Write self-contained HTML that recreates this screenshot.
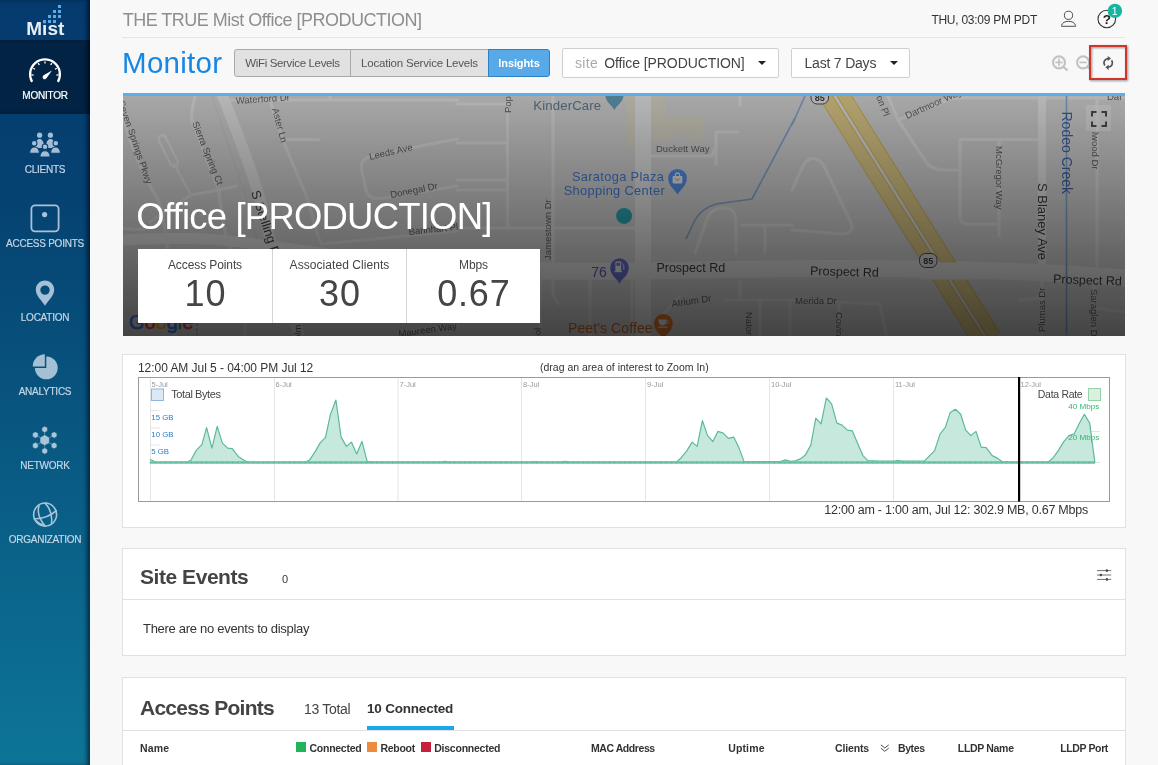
<!DOCTYPE html>
<html><head><meta charset="utf-8">
<style>
*{box-sizing:border-box;margin:0;padding:0}
html,body{width:1158px;height:765px;overflow:hidden;background:#f8f8f8;font-family:"Liberation Sans","DejaVu Sans",sans-serif;color:#333}
.abs{position:absolute}
#side{position:absolute;left:0;top:0;width:90px;height:765px;background:linear-gradient(180deg,#053a6e 0%,#054272 26%,#08547f 52%,#0d7597 100%);box-shadow:inset -4px 0 4px -1px rgba(0,0,10,.55)}
#side .sel{position:absolute;left:0;top:40px;width:90px;height:74px;background:#022344;box-shadow:inset -4px 0 4px -1px rgba(0,0,10,.6)}
.nav{-webkit-text-stroke:0.2px currentColor;position:absolute;left:0;width:90px;text-align:center;color:#c3d6e6;font-size:10px;letter-spacing:-0.25px;line-height:12px;white-space:nowrap}
.nav.on{color:#fff}
.ico{position:absolute;left:0;width:90px}
#title{position:absolute;left:122.7px;top:9px;font-size:18px;line-height:22px;color:#8e8e8e;white-space:nowrap;letter-spacing:-0.5px}
#hline{position:absolute;left:122px;top:37px;width:1003px;height:1px;background:#e1e6ea}
#time{position:absolute;left:899px;width:138px;text-align:right;top:12.7px;font-size:12px;line-height:14px;color:#333;white-space:nowrap;letter-spacing:-0.26px}
#mon{position:absolute;left:122.1px;top:42.8px;font-size:29.5px;line-height:40px;color:#1787e2;letter-spacing:0.25px}
.btn{position:absolute;top:49px;height:28px;border:1px solid #a9a9a9;background:#e1e1e1;font-size:11.5px;line-height:27px;text-align:center;color:#555;white-space:nowrap;letter-spacing:-0.1px}
.dd{position:absolute;top:48px;height:30px;border:1px solid #cfcfcf;border-radius:2px;background:#fff;font-size:14px;line-height:28px;color:#444;white-space:nowrap;letter-spacing:-0.2px}
.caret{position:absolute;top:12px;width:0;height:0;border-left:4.3px solid transparent;border-right:4.3px solid transparent;border-top:4.6px solid #222}
.panel{position:absolute;left:122px;width:1004px;background:#fff;border:1px solid #e1e1e1}
.t{position:absolute;white-space:nowrap}
.hd{font-size:21px;line-height:28px;font-weight:bold;color:#444;letter-spacing:-0.45px}
.th{top:741px;font-size:10.5px;line-height:14px;font-weight:bold;color:#333;letter-spacing:-0.1px}
.stat{position:absolute;top:0;width:134px;height:74px;text-align:center}
.sl{position:absolute;left:0;width:100%;top:9px;font-size:12px;line-height:14px;color:#444;letter-spacing:-0.1px}
.sv{position:absolute;left:0;width:100%;top:22.5px;font-size:36px;line-height:44px;color:#454545;letter-spacing:0.8px;text-indent:0.8px}
</style></head><body><div id="wrap" style="position:absolute;left:0;top:0;width:1158px;height:765px;overflow:hidden;will-change:transform">
<div id="side">
 <div class="sel"></div>
 <svg class="abs" style="left:0;top:0" width="90" height="560" viewBox="0 0 90 560">
  <!-- logo dots -->
  <g fill="#5aaae8">
   <rect x="58" y="5" width="3" height="3"/>
   <rect x="53" y="10" width="3" height="3"/><rect x="58" y="10" width="3" height="3"/>
   <rect x="48" y="15" width="3" height="3"/><rect x="53" y="15" width="3" height="3"/><rect x="58" y="15" width="3" height="3"/>
   <rect x="43" y="20" width="3" height="3"/><rect x="48" y="20" width="3" height="3"/><rect x="53" y="20" width="3" height="3"/>
  </g>
  <text x="26.3" y="34.6" font-family="Liberation Sans, sans-serif" font-weight="bold" font-size="18.5" fill="#e9eef5" textLength="38" lengthAdjust="spacingAndGlyphs">Mist</text>
  <rect x="42.6" y="19.6" width="3.8" height="4.2" fill="#053a6e"/><rect x="43" y="20" width="3" height="3" fill="#5aaae8"/>
  <!-- monitor gauge -->
  <g fill="none" stroke="#fff" stroke-width="2.3" stroke-linecap="butt">
   <path d="M32.1 81.8 A14.9 14.9 0 1 1 57.9 81.8"/>
  </g>
  <g stroke="#fff" stroke-width="1.3">
   <line x1="45" y1="61.5" x2="45" y2="63.6"/><line x1="38.2" y1="63.2" x2="39.3" y2="65"/><line x1="51.8" y1="63.2" x2="50.7" y2="65"/>
   <line x1="33.2" y1="68.2" x2="35" y2="69.3"/><line x1="56.8" y1="68.2" x2="55" y2="69.3"/>
   <line x1="31.5" y1="75" x2="33.6" y2="75"/><line x1="58.5" y1="75" x2="56.4" y2="75"/>
  </g>
  <path d="M52 70.4 L46.6 78 A2.1 2.1 0 1 1 43.6 75.3 Z" fill="#fff"/>
  <!-- clients -->
  <g fill="#a3bdd5">
   <circle cx="39.6" cy="135.2" r="2.6"/><circle cx="50.4" cy="135.2" r="2.6"/>
   <path d="M35.2 148 C35.2 141.5 37 139 39.6 139 C42.2 139 44 141.5 44 148 Z"/>
   <path d="M54.8 148 C54.8 141.5 53 139 50.4 139 C47.8 139 46 141.5 46 148 Z"/>
   <g stroke="#06406f" stroke-width="1.1">
   <circle cx="34.2" cy="143.3" r="2.8"/><circle cx="55.8" cy="143.3" r="2.8"/>
   <path d="M29.6 153.3 C29.6 149.2 31.7 147 34.5 147 C37.3 147 39.4 149.2 39.4 153.3 Z"/>
   <path d="M50.6 153.3 C50.6 149.2 52.7 147 55.5 147 C58.3 147 60.4 149.2 60.4 153.3 Z"/>
   <circle cx="45" cy="146.8" r="2.8"/>
   <path d="M39.9 157.1 C39.9 152.8 42.1 150.6 45 150.6 C47.9 150.6 50.1 152.8 50.1 157.1 Z"/>
   </g>
  </g>
  <!-- access points -->
  <rect x="31.4" y="205.4" width="27.2" height="25.9" rx="3.6" fill="none" stroke="#a9c2d8" stroke-width="1.8"/>
  <circle cx="44.6" cy="214.6" r="2.6" fill="#a9c2d8"/>
  <!-- location -->
  <path fill-rule="evenodd" fill="#a6c0d6" d="M45 280.6 C39.8 280.6 35.8 284.6 35.8 289.8 C35.8 295.5 41.5 300.5 45 305.8 C48.5 300.5 54.2 295.5 54.2 289.8 C54.2 284.6 50.2 280.6 45 280.6 Z M45 285.4 A4.7 4.7 0 1 1 45 294.8 A4.7 4.7 0 1 1 45 285.4 Z"/>
  <!-- analytics -->
  <path fill="#a4c0d5" d="M46.3 356.5 A11.4 11.4 0 1 1 34.9 367.9 L46.3 367.9 Z"/>
  <path fill="#a4c0d5" d="M44.8 354.2 L44.8 366.4 L32.8 366.4 A12.1 12.1 0 0 1 44.8 354.2 Z"/>
  <!-- network -->
  <g fill="#a9c5d7">
   <g stroke="#a9c5d7" stroke-width="0.7" opacity="0.75"><line x1="44.7" y1="440.2" x2="44.7" y2="429.4"/><line x1="44.7" y1="440.2" x2="44.7" y2="451.0"/><line x1="44.7" y1="440.2" x2="35.4" y2="434.9"/><line x1="44.7" y1="440.2" x2="54.1" y2="434.9"/><line x1="44.7" y1="440.2" x2="35.4" y2="445.6"/><line x1="44.7" y1="440.2" x2="54.1" y2="445.6"/></g>
   <g stroke="#0a5584" stroke-width="0.5"><polygon points="44.70,434.80 49.38,437.50 49.38,442.90 44.70,445.60 40.02,442.90 40.02,437.50"/><polygon points="44.70,426.15 47.51,427.77 47.51,431.02 44.70,432.65 41.89,431.02 41.89,427.77"/><polygon points="44.70,447.75 47.51,449.38 47.51,452.62 44.70,454.25 41.89,452.62 41.89,449.38"/><polygon points="35.40,431.65 38.21,433.27 38.21,436.52 35.40,438.15 32.59,436.52 32.59,433.27"/><polygon points="54.10,431.65 56.91,433.27 56.91,436.52 54.10,438.15 51.29,436.52 51.29,433.27"/><polygon points="35.40,442.35 38.21,443.98 38.21,447.23 35.40,448.85 32.59,447.23 32.59,443.98"/><polygon points="54.10,442.35 56.91,443.98 56.91,447.23 54.10,448.85 51.29,447.23 51.29,443.98"/></g>
  </g>
  <!-- organization -->
  <g fill="none" stroke="#a8c6d8" stroke-width="1.55" stroke-linecap="round">
   <circle cx="45.1" cy="514.6" r="11.5"/>
   <path d="M39 506 C37.4 511 39 518.5 44.6 525.6"/>
   <path d="M45.3 503.4 C49.6 508 52.6 515 51.5 523.2"/>
   <path d="M34.3 519.1 C42 518.6 51 515.6 56.3 510.6"/>
   <path d="M36.2 520.8 C38.6 523.3 41.4 525 44.6 525.6"/>
  </g>
 </svg>
 <div class="nav on" style="top:89.6px">MONITOR</div>
 <div class="nav" style="top:163.6px">CLIENTS</div>
 <div class="nav" style="top:237.6px">ACCESS POINTS</div>
 <div class="nav" style="top:311.6px">LOCATION</div>
 <div class="nav" style="top:385.6px">ANALYTICS</div>
 <div class="nav" style="top:459.6px">NETWORK</div>
 <div class="nav" style="top:533.6px">ORGANIZATION</div>
</div>
<div id="title">THE TRUE Mist Office [PRODUCTION]</div>
<div id="hline"></div>
<div id="time">THU, 03:09 PM PDT</div>
<svg class="abs" style="left:1050px;top:0" width="90" height="90" viewBox="1050 0 90 90">
 <!-- user -->
 <g fill="none" stroke="#444" stroke-width="0.95">
  <circle cx="1068.5" cy="15.3" r="4.1"/>
  <path d="M1061.5 26.3 L1061.5 25.6 C1062.3 22.6 1065 21.3 1068.5 21.3 C1072 21.3 1074.7 22.6 1075.6 25.6 L1075.6 26.3 Z"/>
 </g>
 <!-- help -->
 <circle cx="1106.8" cy="19" r="8.8" fill="none" stroke="#333" stroke-width="1.1"/>
 <text x="1106.8" y="23.8" text-anchor="middle" font-family="Liberation Sans, sans-serif" font-weight="bold" font-size="13.5" fill="#222">?</text>
 <circle cx="1114.9" cy="10.9" r="7.2" fill="#17b59d"/>
 <text x="1114.7" y="14.5" text-anchor="middle" font-family="Liberation Sans, sans-serif" font-size="10.5" fill="#fff">1</text>
 <!-- zoom in -->
 <g fill="none" stroke="#c2c2c2" stroke-width="2.1">
  <circle cx="1059" cy="62.4" r="6"/><line x1="1063.4" y1="66.9" x2="1067.6" y2="70.5" stroke-width="2.3"/>
  <line x1="1055.4" y1="62.4" x2="1062.6" y2="62.4" stroke-width="1.7"/><line x1="1059" y1="58.8" x2="1059" y2="66" stroke-width="1.7"/>
  <circle cx="1083.1" cy="62.4" r="6"/><line x1="1087.5" y1="66.9" x2="1091.7" y2="70.5" stroke-width="2.3"/>
  <line x1="1079.5" y1="62.4" x2="1086.7" y2="62.4" stroke-width="1.7"/>
 </g>
</svg>
<div class="abs" style="left:1090px;top:46px;width:37px;height:34px;background:#f8f8f8"></div><div class="abs" style="left:1089px;top:45px;width:38px;height:35px;border:2.2px solid #d0352c;filter:drop-shadow(1.8px 1.9px 0.9px rgba(95,105,105,.72))"></div>
<svg class="abs" style="left:1098px;top:53px" width="20" height="20" viewBox="1098 53 20 20"><g fill="none" stroke="#555" stroke-width="1.8"><path d="M1108.4 58.6 A4.3 4.3 0 0 0 1104.8 65.5"/><path d="M1108 67.2 A4.3 4.3 0 0 0 1111.6 60.3"/></g><path d="M1107.7 55.9 L1111.1 58.5 L1107.7 61.1 Z" fill="#555"/><path d="M1108.7 64.7 L1105.3 67.3 L1108.7 69.9 Z" fill="#555"/></svg>
<div id="mon">Monitor</div>
<div class="btn" style="left:234px;width:117px;border-radius:3px 0 0 3px;letter-spacing:-0.34px">WiFi Service Levels</div>
<div class="btn" style="left:350px;width:139px;letter-spacing:-0.2px">Location Service Levels</div>
<div class="btn" style="left:488px;width:62px;border-radius:0 3px 3px 0;background:#58a9e8;border-color:#2f7fc6;color:#fff;font-weight:bold;font-size:11px">Insights</div>
<div class="dd" style="left:562px;width:217px"><span style="position:absolute;left:12px;color:#aaa;letter-spacing:0.3px">site</span><span style="position:absolute;left:41.2px;letter-spacing:-0.09px">Office [PRODUCTION]</span><i class="caret" style="left:195px"></i></div>
<div class="dd" style="left:791px;width:119px"><span style="position:absolute;left:12.5px">Last 7 Days</span><i class="caret" style="left:97.5px"></i></div>
<div id="map" class="abs" style="left:123px;top:93px;width:1002.4px;height:243px;background:#e9e9e9;border-top:3px solid #5aaeea;overflow:hidden">
<svg class="abs" style="left:-1px;top:0" width="1003" height="240" viewBox="122 96 1003 240" font-family="Liberation Sans, sans-serif">
 <rect x="122" y="96" width="1003" height="240" fill="#e5e5e5"/>
 <!-- commercial blocks -->
 <g fill="#ebe7d8"><rect x="626.3" y="96" width="9" height="52"/><path d="M651 96 H666.2 V116.6 H704.2 V141.3 H689 V133.7 H673.8 V141.3 H651 Z"/></g>
 <!-- minor roads -->
 <g fill="none" stroke="#f4f4f4" stroke-width="3.2" stroke-linecap="round" stroke-linejoin="round">
  <path d="M120 100 C128 150 150 185 158 200 C165 215 168 250 175 335"/>
  <path d="M195 96 C193 108 190 114 192 121 L218.5 190 L191 195 M218.5 190 L236 186 M218.5 190 C222 215 224 240 236 262 M191 195 L150 222 M122 228 C140 232 152 228 160 222"/>
  <path d="M159 141 L170.5 164 C173 169 180 166 177.5 161 L166 138 C163.5 133 156.5 136 159 141 M174 164 L191 195" stroke-width="2.4"/>
  <path d="M230 100 L458 100 M330 100 L330 96"/>
  <path d="M270 101 L284 143 L308 200 C314 222 318 240 322 244 L457 231"/><path d="M212 96 L247 200 C255 230 262 260 270 300" stroke-width="1" stroke="#dcdcdc"/>
  <path d="M285 139.6 L319 139.6"/>
  <path d="M457 139 C420 146 390 152 372 156 C362 158 360 164 362 172 L366 190 C368 198 374 200 384 198 L457 186"/>
  <path d="M398 332 L458 325 M300 335 L300 300 M245 335 L245 318"/>
  <path d="M457 104 L507 104 M457 143 L507 143 M457 180 L507 180"/>
  <path d="M507.5 96 L507.5 228"/>
  <path d="M553 96 L553 290 C553 298 556 302 560 304"/>
  <path d="M457 228 L640 228 M457 190 L507 190"/>
  <path d="M590 280 L590 335 M540 280 L540 335 M632 282 L632 335"/>
  <path d="M650 156 L712 156 L716 146 L716 132 L738 132 M716 146 L716 164"/>
  <path d="M740 96 L740 105"/>
  <path d="M695 253 L706 222 C710 210 716 208 724 208 C734 208 736 214 736 222 L736 253"/>
  <path d="M742 225 L792 225 M765 225 L765 253"/>
  <path d="M740 282 L740 300 M725 300 L790 300 M790 300 L790 335 M760 300 L760 335"/>
  <path d="M680 296 L660 318"/>
  <path d="M792 230 L841 234 C850 234 854 230 851 223 L824 166 C818 156 808 156 803 166 L792 190"/>
  <path d="M792 300 L880 304 L886 335 M839 304 L839 335"/>
  <path d="M888 96 L898 120 L926 162 C930 168 936 170 944 170 L960 170"/>
  <path d="M898 120 L940 103 C948 99 952 97.8 962 97.8 L1040 97.8"/>
  <path d="M960 139.5 L1040 139.5 M960 139.5 L960 216 C960 222 964 224 970 224 L999 224 M999 139.5 L999 236"/>
  <path d="M1097 96 L1097 272"/>
  <path d="M1020 300 L1042 298 M1042 282 L1042 335 M1094 284 L1094 335 M1094 308 L1125 312"/>
  <path d="M1047 97.8 L1125 97.8"/>
 </g>
 <!-- major roads -->
 <g fill="none" stroke="#f8f8f8" stroke-linecap="butt" stroke-linejoin="round">
  <path d="M222 94 C240 140 258 185 268 230 C276 265 286 300 300 338" stroke-width="11"/>
  <path d="M643 94 L643 338" stroke-width="16"/>
  <path d="M457 268 C520 272 600 272 700 270 C800 268 900 268 1000 271 C1060 273 1100 276 1127 278" stroke-width="17"/>
  <path d="M1042 94 L1042 272" stroke-width="8"/>
  <path d="M122 240 C200 236 230 240 270 246 C340 256 400 264 457 268" stroke-width="11"/>
 </g>
 <!-- creeks -->
 <g fill="none" stroke="#8fb4e0" stroke-width="1.6" stroke-linejoin="round">
  <path d="M795 118 L752 199 L716 204 C704 208 698 214 695 220 L686 239"/>
  <path d="M1066.5 96 L1066.5 335"/>
  <path d="M805 96 L792 125"/>
 </g>
 <!-- highway 85 -->
 <g fill="none">
  <path d="M831 90 L987.4 340" stroke="#e3c46a" stroke-width="29.5"/>
  <path d="M831 90 L987.4 340" stroke="#f3dd95" stroke-width="27.5"/>
  <path d="M831 90 L987.4 340" stroke="#e3c46a" stroke-width="4.6"/>
  <path d="M831 90 L987.4 340" stroke="#f4f4f4" stroke-width="2.6"/>
 </g>
 <rect x="920" y="262.5" width="56" height="17" fill="#f8f8f8"/>
 <!-- shields -->
 <g>
  <rect x="919.5" y="253.5" width="17.5" height="14" rx="6" fill="#f2f2f2" stroke="#555" stroke-width="1"/>
  <text x="928.3" y="264.3" font-size="9" font-weight="bold" text-anchor="middle" fill="#444">85</text>
  <rect x="811" y="90" width="17.5" height="14" rx="6" fill="#f2f2f2" stroke="#555" stroke-width="1"/>
  <text x="819.8" y="100.5" font-size="9" font-weight="bold" text-anchor="middle" fill="#444">85</text>
 </g>
 <!-- road labels -->
 <g fill="#6a6a6a" font-size="9.5">
  <text transform="translate(118,102) rotate(71)">Seven Springs Pkwy</text>
  <text transform="translate(192,123) rotate(68)">Sierra Spring Ct</text>
  <text x="236" y="104" transform="rotate(-4 236 104)">Waterford Dr</text>
  <text transform="translate(272,109) rotate(75)">Aster Ln</text>
  <text transform="translate(370,160) rotate(-13)">Leeds Ave</text>
  <text transform="translate(391,198) rotate(-11)">Donegal Dr</text>
  <text transform="translate(409,235) rotate(-6)">Bannhart Pl</text>
  <text transform="translate(399,337) rotate(-8)">Maureen Way</text>
  <text transform="translate(511,113) rotate(-90)">Pop</text>
  <text transform="translate(551,260) rotate(-90)">Jamestown Dr</text>
  <text x="656" y="152">Duckett Way</text>
  <text transform="translate(672,307) rotate(-8)">Atrium Dr</text>
  <text transform="translate(746,312) rotate(90)">Nator</text>
  <text x="795" y="304">Merida Dr</text>
  <text transform="translate(836,312) rotate(90)">Covin</text>
  <text transform="translate(876,97) rotate(68)">on Pl</text>
  <text transform="translate(907,119) rotate(-24)">Dartmoor Way</text>
  <text transform="translate(996,146) rotate(90)">McGregor Way</text>
  <text transform="translate(1092,132) rotate(90)">lwood Dr</text>
  <text transform="translate(1045,332) rotate(-90)">Plumas Dr</text>
  <text transform="translate(1091,289) rotate(90)">Saraglen Dr</text>
  <text x="1107" y="100">Dar</text>
  <text transform="translate(301,340) rotate(-90)">olm</text>
  <text transform="translate(541,340) rotate(-90)">col</text>
 </g>
 <g fill="#444" font-size="12.5">
  <text transform="translate(251,192) rotate(72)" font-size="13">S Stelling Rd</text>
  <text x="656.4" y="271.7">Prospect Rd</text>
  <text x="810" y="275" transform="rotate(1.5 810 275)">Prospect Rd</text>
  <text x="1053" y="283" transform="rotate(2 1053 283)">Prospect Rd</text>
  <text transform="translate(1037.8,183) rotate(90)" font-size="13">S Blaney Ave</text>
 </g>
 <text transform="translate(1061.5,111.5) rotate(90)" font-size="14" fill="#3f6db5">Rodeo Creek</text>
 <!-- POIs -->
 <text x="533.3" y="110" font-size="13.2" fill="#67849b" letter-spacing="0.12">KinderCare</text>
 <path d="M614.4 110.2 C612.5 105 605.4 102.5 605.4 95.5 A9 9 0 1 1 623.4 95.5 C623.4 102.5 616.3 105 614.4 110.2 Z" fill="#6ca9c2"/>
 <g fill="#4a86e4" font-size="12.8" text-anchor="end" letter-spacing="0.35"><text x="664.3" y="180.8">Saratoga Plaza</text><text x="665" y="194.7">Shopping Center</text></g>
 <path d="M677.5 194.8 C675.5 189.5 668.2 186.5 668.2 178.2 A9.3 9.3 0 1 1 686.8 178.2 C686.8 186.5 679.5 189.5 677.5 194.8 Z" fill="#5a9cff"/>
 <rect x="672.6" y="176" width="9.8" height="7.4" rx="0.8" fill="#fff"/><path d="M675.3 176 C675.3 171.8 679.7 171.8 679.7 176" fill="none" stroke="#fff" stroke-width="1.1"/><path d="M675.6 178.6 C676.2 180.6 678.8 180.6 679.4 178.6" fill="none" stroke="#5a9cff" stroke-width="0.9"/>
 <circle cx="624.1" cy="215.9" r="8" fill="#30b4c6"/>
 <text x="591.2" y="276.8" font-size="14" fill="#5a66b8">76</text>
 <path d="M619.5 284 C617.5 278.5 610.2 276 610.2 267.5 A9.3 9.3 0 1 1 628.8 267.5 C628.8 276 621.5 278.5 619.5 284 Z" fill="#7078dc"/>
 <rect x="615.4" y="261.6" width="5.8" height="9.8" rx="0.6" fill="#fff"/><rect x="616.5" y="262.9" width="3.6" height="2.8" fill="#7078dc"/><path d="M622.2 263.6 L623.8 265 L623.8 270" stroke="#fff" stroke-width="0.9" fill="none"/><rect x="614.6" y="271" width="7.4" height="1.2" fill="#fff"/>
 <text x="568" y="332.8" font-size="14" fill="#dc6e22" letter-spacing="0.1">Peet's Coffee</text>
 <path d="M663.4 339.5 C661.4 334 654.1 331.5 654.1 323.2 A9.3 9.3 0 1 1 672.7 323.2 C672.7 331.5 665.4 334 663.4 339.5 Z" fill="#f2822e"/>
 <path d="M658.4 319.6 L666.6 319.6 C666.6 323.6 665 325.6 662.5 325.6 C660 325.6 658.4 323.6 658.4 319.6 Z" fill="#fff"/><path d="M666.4 320.3 C669.4 320.3 669.2 323.4 666 323.4" fill="none" stroke="#fff" stroke-width="0.9"/><rect x="658" y="326.6" width="9.4" height="1.1" fill="#fff"/>
 <!-- google logo -->
 <text x="128.9" y="328.7" font-size="20" stroke-width="0.7"><tspan fill="#4285f4" stroke="#4285f4">G</tspan><tspan fill="#ea4335" stroke="#ea4335">o</tspan><tspan fill="#fbbc05" stroke="#fbbc05">o</tspan><tspan fill="#4285f4" stroke="#4285f4">g</tspan><tspan fill="#34a853" stroke="#34a853">l</tspan><tspan fill="#ea4335" stroke="#ea4335">e</tspan></text>
 <line x1="197" y1="318" x2="197" y2="335" stroke="#5a9a5a" stroke-width="0.8" stroke-dasharray="3 2"/>
 <!-- fullscreen button -->
 <rect x="1086" y="105" width="25" height="26" rx="1.5" fill="#fff" fill-opacity="0.55"/>
</svg>
<div class="abs" style="left:0;top:0;width:1003px;height:240px;background:linear-gradient(180deg,rgba(0,0,0,.265) 0%,rgba(0,0,0,.705) 100%)"></div>
<svg class="abs" style="left:968px;top:15px" width="16" height="16" viewBox="0 0 16 16"><path d="M1 5.5 V1 H5.5 M10.5 1 H15 V5.5 M15 10.5 V15 H10.5 M5.5 15 H1 V10.5" fill="none" stroke="#3a3a3a" stroke-width="2"/></svg>
<div class="t" style="left:13.3px;top:98.8px;font-size:36.5px;line-height:44px;color:#fff;letter-spacing:-0.8px">Office [PRODUCTION]</div>
<div class="abs" style="left:15px;top:153px;width:402px;height:74px;background:#fff">
 <div class="stat" style="left:0"><div class="sl">Access Points</div><div class="sv">10</div></div>
 <div class="stat" style="left:134px;border-left:1px solid #d4d4d4"><div class="sl" style="letter-spacing:0.06px">Associated Clients</div><div class="sv">30</div></div>
 <div class="stat" style="left:268px;border-left:1px solid #d4d4d4"><div class="sl">Mbps</div><div class="sv">0.67</div></div>
</div>
</div>
<div class="panel" style="top:354px;height:174px"></div>
<div class="t" style="left:138px;top:361px;font-size:12px;line-height:14px;color:#333;letter-spacing:-0.05px">12:00 AM Jul 5 - 04:00 PM Jul 12</div>
<div class="t" style="left:540px;top:361px;font-size:10.5px;line-height:12px;color:#333">(drag an area of interest to Zoom In)</div>
<svg class="abs" style="left:130px;top:370px" width="990" height="140" viewBox="130 370 990 140" font-family="Liberation Sans, sans-serif">
 <rect x="138.5" y="377.5" width="971" height="124" fill="#fff" stroke="#9a9a9a" stroke-width="1"/>
 <g stroke="#e5e5e5" stroke-width="1"><line x1="150.5" y1="378" x2="150.5" y2="501" /><line x1="274.5" y1="378" x2="274.5" y2="501" /><line x1="398" y1="378" x2="398" y2="501" /><line x1="521.5" y1="378" x2="521.5" y2="501" /><line x1="645.5" y1="378" x2="645.5" y2="501" /><line x1="769.5" y1="378" x2="769.5" y2="501" /><line x1="893.5" y1="378" x2="893.5" y2="501" /></g>
 <g font-size="7.5" fill="#999"><text x="151.5" y="386.8">5-Jul</text><text x="275.5" y="386.8">6-Jul</text><text x="399.5" y="386.8">7-Jul</text><text x="523" y="386.8">8-Jul</text><text x="647" y="386.8">9-Jul</text><text x="771" y="386.8">10-Jul</text><text x="895" y="386.8">11-Jul</text><text x="1020.5" y="386.8">12-Jul</text></g>
 <g stroke="#e4e4e4" stroke-width="1"><line x1="150" y1="410.5" x2="159.5" y2="410.5"/><line x1="150" y1="428" x2="159.5" y2="428"/><line x1="150" y1="445" x2="159.5" y2="445"/>
 <line x1="1090" y1="431.5" x2="1100" y2="431.5"/><line x1="1095" y1="462.5" x2="1100" y2="462.5"/></g>
 <path d="M150,462.8 L150,459.2 L152.5,460.5 L155,462.3 L165,462.4 L186.4,462.2 L190.9,460.2 L196.4,450.1 L201.9,444.6 L206.6,427.6 L211.9,448.1 L217.2,426.4 L222.4,443.1 L227.7,448.1 L232.2,448.6 L238.2,456.4 L243.2,459.7 L248.2,462.2 L260,462.3 L305.3,462.2 L309.8,459.7 L315.3,451.4 L320.3,442.6 L325.4,437.6 L330.4,414.6 L335.9,400 L341.1,437.1 L346.4,446.4 L351.4,442.1 L356.7,453.9 L361.9,441.4 L367.2,461.4 L372,462 L440,462 L445,461.4 L450,462 L530,462 L535,461.5 L540,462 L560,462 L565,461.3 L570,462 L650,462.1 L676.3,462.2 L681.3,457.7 L686.9,450.6 L692.1,442.1 L697.1,446.4 L702.4,420.6 L707.6,435.6 L712.9,441.6 L717.9,431.4 L723.2,433.1 L728.4,438.4 L733.7,437.1 L738.9,447.6 L744,461.4 L750,461.7 L780.3,461.6 L785.3,459.9 L790.3,461.3 L795.3,460.9 L800.3,458.9 L805.3,455.1 L810.8,445.1 L815.8,418.1 L821.1,423.8 L826.3,398 L831.6,403.8 L836.9,423.1 L842.1,425.1 L847.4,430.1 L852.4,430.9 L857.9,443.9 L862.9,455.6 L867.9,460.7 L880,461 L893,461.2 L898,460.6 L903,461.2 L924.6,460.9 L929.6,455.6 L934.6,450.6 L940.1,433.9 L945.2,427.6 L950.2,412.6 L955.4,409.3 L960.7,414.3 L965.7,430.1 L970.9,435.6 L976,431.4 L981.2,447.1 L986.2,447.6 L992.2,455.6 L997.2,458.1 L1002.3,461.7 L1010,462 L1048.3,461.9 L1053.3,457.7 L1058.6,450.1 L1063.9,441.4 L1069.1,435.6 L1074.1,433.9 L1079.1,423.8 L1084.4,414.3 L1089.7,423.1 L1092.9,447.6 L1094.9,462.3 L1094.9,462.8 Z" fill="#c6e8dd"/>
 <path d="M150,459.2 L152.5,460.5 L155,462.3 L165,462.4 L186.4,462.2 L190.9,460.2 L196.4,450.1 L201.9,444.6 L206.6,427.6 L211.9,448.1 L217.2,426.4 L222.4,443.1 L227.7,448.1 L232.2,448.6 L238.2,456.4 L243.2,459.7 L248.2,462.2 L260,462.3 L305.3,462.2 L309.8,459.7 L315.3,451.4 L320.3,442.6 L325.4,437.6 L330.4,414.6 L335.9,400 L341.1,437.1 L346.4,446.4 L351.4,442.1 L356.7,453.9 L361.9,441.4 L367.2,461.4 L372,462 L440,462 L445,461.4 L450,462 L530,462 L535,461.5 L540,462 L560,462 L565,461.3 L570,462 L650,462.1 L676.3,462.2 L681.3,457.7 L686.9,450.6 L692.1,442.1 L697.1,446.4 L702.4,420.6 L707.6,435.6 L712.9,441.6 L717.9,431.4 L723.2,433.1 L728.4,438.4 L733.7,437.1 L738.9,447.6 L744,461.4 L750,461.7 L780.3,461.6 L785.3,459.9 L790.3,461.3 L795.3,460.9 L800.3,458.9 L805.3,455.1 L810.8,445.1 L815.8,418.1 L821.1,423.8 L826.3,398 L831.6,403.8 L836.9,423.1 L842.1,425.1 L847.4,430.1 L852.4,430.9 L857.9,443.9 L862.9,455.6 L867.9,460.7 L880,461 L893,461.2 L898,460.6 L903,461.2 L924.6,460.9 L929.6,455.6 L934.6,450.6 L940.1,433.9 L945.2,427.6 L950.2,412.6 L955.4,409.3 L960.7,414.3 L965.7,430.1 L970.9,435.6 L976,431.4 L981.2,447.1 L986.2,447.6 L992.2,455.6 L997.2,458.1 L1002.3,461.7 L1010,462 L1048.3,461.9 L1053.3,457.7 L1058.6,450.1 L1063.9,441.4 L1069.1,435.6 L1074.1,433.9 L1079.1,423.8 L1084.4,414.3 L1089.7,423.1 L1092.9,447.6 L1094.9,462.3" fill="none" stroke="#5cba9c" stroke-width="1.2" stroke-linejoin="round"/>
 <line x1="150" y1="462.4" x2="1095" y2="462.4" stroke="#6cc2a6" stroke-width="2.5"/>
 <g stroke="#4aa88a" stroke-width="0.6" opacity="0.7"><line x1="150.0" y1="461.5" x2="150.0" y2="463.6"/><line x1="155.16" y1="461.5" x2="155.16" y2="463.6"/><line x1="160.32" y1="461.5" x2="160.32" y2="463.6"/><line x1="165.48" y1="461.5" x2="165.48" y2="463.6"/><line x1="170.64" y1="461.5" x2="170.64" y2="463.6"/><line x1="175.8" y1="461.5" x2="175.8" y2="463.6"/><line x1="180.96" y1="461.5" x2="180.96" y2="463.6"/><line x1="186.12" y1="461.5" x2="186.12" y2="463.6"/><line x1="191.28" y1="461.5" x2="191.28" y2="463.6"/><line x1="196.44" y1="461.5" x2="196.44" y2="463.6"/><line x1="201.6" y1="461.5" x2="201.6" y2="463.6"/><line x1="206.76" y1="461.5" x2="206.76" y2="463.6"/><line x1="211.92000000000002" y1="461.5" x2="211.92000000000002" y2="463.6"/><line x1="217.07999999999998" y1="461.5" x2="217.07999999999998" y2="463.6"/><line x1="222.24" y1="461.5" x2="222.24" y2="463.6"/><line x1="227.4" y1="461.5" x2="227.4" y2="463.6"/><line x1="232.56" y1="461.5" x2="232.56" y2="463.6"/><line x1="237.72" y1="461.5" x2="237.72" y2="463.6"/><line x1="242.88" y1="461.5" x2="242.88" y2="463.6"/><line x1="248.04000000000002" y1="461.5" x2="248.04000000000002" y2="463.6"/><line x1="253.2" y1="461.5" x2="253.2" y2="463.6"/><line x1="258.36" y1="461.5" x2="258.36" y2="463.6"/><line x1="263.52" y1="461.5" x2="263.52" y2="463.6"/><line x1="268.68" y1="461.5" x2="268.68" y2="463.6"/><line x1="273.84000000000003" y1="461.5" x2="273.84000000000003" y2="463.6"/><line x1="279.0" y1="461.5" x2="279.0" y2="463.6"/><line x1="284.15999999999997" y1="461.5" x2="284.15999999999997" y2="463.6"/><line x1="289.32" y1="461.5" x2="289.32" y2="463.6"/><line x1="294.48" y1="461.5" x2="294.48" y2="463.6"/><line x1="299.64" y1="461.5" x2="299.64" y2="463.6"/><line x1="304.8" y1="461.5" x2="304.8" y2="463.6"/><line x1="309.96000000000004" y1="461.5" x2="309.96000000000004" y2="463.6"/><line x1="315.12" y1="461.5" x2="315.12" y2="463.6"/><line x1="320.28" y1="461.5" x2="320.28" y2="463.6"/><line x1="325.44" y1="461.5" x2="325.44" y2="463.6"/><line x1="330.6" y1="461.5" x2="330.6" y2="463.6"/><line x1="335.76" y1="461.5" x2="335.76" y2="463.6"/><line x1="340.92" y1="461.5" x2="340.92" y2="463.6"/><line x1="346.08000000000004" y1="461.5" x2="346.08000000000004" y2="463.6"/><line x1="351.24" y1="461.5" x2="351.24" y2="463.6"/><line x1="356.4" y1="461.5" x2="356.4" y2="463.6"/><line x1="361.56" y1="461.5" x2="361.56" y2="463.6"/><line x1="366.72" y1="461.5" x2="366.72" y2="463.6"/><line x1="371.88" y1="461.5" x2="371.88" y2="463.6"/><line x1="377.04" y1="461.5" x2="377.04" y2="463.6"/><line x1="382.20000000000005" y1="461.5" x2="382.20000000000005" y2="463.6"/><line x1="387.36" y1="461.5" x2="387.36" y2="463.6"/><line x1="392.52" y1="461.5" x2="392.52" y2="463.6"/><line x1="397.68" y1="461.5" x2="397.68" y2="463.6"/><line x1="402.84000000000003" y1="461.5" x2="402.84000000000003" y2="463.6"/><line x1="408.0" y1="461.5" x2="408.0" y2="463.6"/><line x1="413.16" y1="461.5" x2="413.16" y2="463.6"/><line x1="418.32" y1="461.5" x2="418.32" y2="463.6"/><line x1="423.48" y1="461.5" x2="423.48" y2="463.6"/><line x1="428.64" y1="461.5" x2="428.64" y2="463.6"/><line x1="433.8" y1="461.5" x2="433.8" y2="463.6"/><line x1="438.96000000000004" y1="461.5" x2="438.96000000000004" y2="463.6"/><line x1="444.12" y1="461.5" x2="444.12" y2="463.6"/><line x1="449.28000000000003" y1="461.5" x2="449.28000000000003" y2="463.6"/><line x1="454.44" y1="461.5" x2="454.44" y2="463.6"/><line x1="459.6" y1="461.5" x2="459.6" y2="463.6"/><line x1="464.76" y1="461.5" x2="464.76" y2="463.6"/><line x1="469.92" y1="461.5" x2="469.92" y2="463.6"/><line x1="475.08" y1="461.5" x2="475.08" y2="463.6"/><line x1="480.24" y1="461.5" x2="480.24" y2="463.6"/><line x1="485.40000000000003" y1="461.5" x2="485.40000000000003" y2="463.6"/><line x1="490.56" y1="461.5" x2="490.56" y2="463.6"/><line x1="495.72" y1="461.5" x2="495.72" y2="463.6"/><line x1="500.88" y1="461.5" x2="500.88" y2="463.6"/><line x1="506.04" y1="461.5" x2="506.04" y2="463.6"/><line x1="511.2" y1="461.5" x2="511.2" y2="463.6"/><line x1="516.36" y1="461.5" x2="516.36" y2="463.6"/><line x1="521.52" y1="461.5" x2="521.52" y2="463.6"/><line x1="526.6800000000001" y1="461.5" x2="526.6800000000001" y2="463.6"/><line x1="531.84" y1="461.5" x2="531.84" y2="463.6"/><line x1="537.0" y1="461.5" x2="537.0" y2="463.6"/><line x1="542.1600000000001" y1="461.5" x2="542.1600000000001" y2="463.6"/><line x1="547.3199999999999" y1="461.5" x2="547.3199999999999" y2="463.6"/><line x1="552.48" y1="461.5" x2="552.48" y2="463.6"/><line x1="557.64" y1="461.5" x2="557.64" y2="463.6"/><line x1="562.8" y1="461.5" x2="562.8" y2="463.6"/><line x1="567.96" y1="461.5" x2="567.96" y2="463.6"/><line x1="573.12" y1="461.5" x2="573.12" y2="463.6"/><line x1="578.28" y1="461.5" x2="578.28" y2="463.6"/><line x1="583.44" y1="461.5" x2="583.44" y2="463.6"/><line x1="588.6" y1="461.5" x2="588.6" y2="463.6"/><line x1="593.76" y1="461.5" x2="593.76" y2="463.6"/><line x1="598.9200000000001" y1="461.5" x2="598.9200000000001" y2="463.6"/><line x1="604.08" y1="461.5" x2="604.08" y2="463.6"/><line x1="609.24" y1="461.5" x2="609.24" y2="463.6"/><line x1="614.4000000000001" y1="461.5" x2="614.4000000000001" y2="463.6"/><line x1="619.56" y1="461.5" x2="619.56" y2="463.6"/><line x1="624.72" y1="461.5" x2="624.72" y2="463.6"/><line x1="629.88" y1="461.5" x2="629.88" y2="463.6"/><line x1="635.04" y1="461.5" x2="635.04" y2="463.6"/><line x1="640.2" y1="461.5" x2="640.2" y2="463.6"/><line x1="645.36" y1="461.5" x2="645.36" y2="463.6"/><line x1="650.52" y1="461.5" x2="650.52" y2="463.6"/><line x1="655.6800000000001" y1="461.5" x2="655.6800000000001" y2="463.6"/><line x1="660.84" y1="461.5" x2="660.84" y2="463.6"/><line x1="666.0" y1="461.5" x2="666.0" y2="463.6"/><line x1="671.16" y1="461.5" x2="671.16" y2="463.6"/><line x1="676.32" y1="461.5" x2="676.32" y2="463.6"/><line x1="681.48" y1="461.5" x2="681.48" y2="463.6"/><line x1="686.64" y1="461.5" x2="686.64" y2="463.6"/><line x1="691.8000000000001" y1="461.5" x2="691.8000000000001" y2="463.6"/><line x1="696.96" y1="461.5" x2="696.96" y2="463.6"/><line x1="702.12" y1="461.5" x2="702.12" y2="463.6"/><line x1="707.28" y1="461.5" x2="707.28" y2="463.6"/><line x1="712.44" y1="461.5" x2="712.44" y2="463.6"/><line x1="717.6" y1="461.5" x2="717.6" y2="463.6"/><line x1="722.76" y1="461.5" x2="722.76" y2="463.6"/><line x1="727.9200000000001" y1="461.5" x2="727.9200000000001" y2="463.6"/><line x1="733.08" y1="461.5" x2="733.08" y2="463.6"/><line x1="738.24" y1="461.5" x2="738.24" y2="463.6"/><line x1="743.4" y1="461.5" x2="743.4" y2="463.6"/><line x1="748.5600000000001" y1="461.5" x2="748.5600000000001" y2="463.6"/><line x1="753.72" y1="461.5" x2="753.72" y2="463.6"/><line x1="758.88" y1="461.5" x2="758.88" y2="463.6"/><line x1="764.04" y1="461.5" x2="764.04" y2="463.6"/><line x1="769.2" y1="461.5" x2="769.2" y2="463.6"/><line x1="774.36" y1="461.5" x2="774.36" y2="463.6"/><line x1="779.52" y1="461.5" x2="779.52" y2="463.6"/><line x1="784.6800000000001" y1="461.5" x2="784.6800000000001" y2="463.6"/><line x1="789.84" y1="461.5" x2="789.84" y2="463.6"/><line x1="795.0" y1="461.5" x2="795.0" y2="463.6"/><line x1="800.16" y1="461.5" x2="800.16" y2="463.6"/><line x1="805.32" y1="461.5" x2="805.32" y2="463.6"/><line x1="810.48" y1="461.5" x2="810.48" y2="463.6"/><line x1="815.64" y1="461.5" x2="815.64" y2="463.6"/><line x1="820.8000000000001" y1="461.5" x2="820.8000000000001" y2="463.6"/><line x1="825.96" y1="461.5" x2="825.96" y2="463.6"/><line x1="831.12" y1="461.5" x2="831.12" y2="463.6"/><line x1="836.28" y1="461.5" x2="836.28" y2="463.6"/><line x1="841.44" y1="461.5" x2="841.44" y2="463.6"/><line x1="846.6" y1="461.5" x2="846.6" y2="463.6"/><line x1="851.76" y1="461.5" x2="851.76" y2="463.6"/><line x1="856.9200000000001" y1="461.5" x2="856.9200000000001" y2="463.6"/><line x1="862.08" y1="461.5" x2="862.08" y2="463.6"/><line x1="867.24" y1="461.5" x2="867.24" y2="463.6"/><line x1="872.4" y1="461.5" x2="872.4" y2="463.6"/><line x1="877.5600000000001" y1="461.5" x2="877.5600000000001" y2="463.6"/><line x1="882.72" y1="461.5" x2="882.72" y2="463.6"/><line x1="887.88" y1="461.5" x2="887.88" y2="463.6"/><line x1="893.04" y1="461.5" x2="893.04" y2="463.6"/><line x1="898.2" y1="461.5" x2="898.2" y2="463.6"/><line x1="903.36" y1="461.5" x2="903.36" y2="463.6"/><line x1="908.52" y1="461.5" x2="908.52" y2="463.6"/><line x1="913.6800000000001" y1="461.5" x2="913.6800000000001" y2="463.6"/><line x1="918.84" y1="461.5" x2="918.84" y2="463.6"/><line x1="924.0" y1="461.5" x2="924.0" y2="463.6"/><line x1="929.16" y1="461.5" x2="929.16" y2="463.6"/><line x1="934.32" y1="461.5" x2="934.32" y2="463.6"/><line x1="939.48" y1="461.5" x2="939.48" y2="463.6"/><line x1="944.64" y1="461.5" x2="944.64" y2="463.6"/><line x1="949.8000000000001" y1="461.5" x2="949.8000000000001" y2="463.6"/><line x1="954.96" y1="461.5" x2="954.96" y2="463.6"/><line x1="960.12" y1="461.5" x2="960.12" y2="463.6"/><line x1="965.28" y1="461.5" x2="965.28" y2="463.6"/><line x1="970.44" y1="461.5" x2="970.44" y2="463.6"/><line x1="975.6" y1="461.5" x2="975.6" y2="463.6"/><line x1="980.76" y1="461.5" x2="980.76" y2="463.6"/><line x1="985.9200000000001" y1="461.5" x2="985.9200000000001" y2="463.6"/><line x1="991.08" y1="461.5" x2="991.08" y2="463.6"/><line x1="996.24" y1="461.5" x2="996.24" y2="463.6"/><line x1="1001.4" y1="461.5" x2="1001.4" y2="463.6"/><line x1="1006.5600000000001" y1="461.5" x2="1006.5600000000001" y2="463.6"/><line x1="1011.72" y1="461.5" x2="1011.72" y2="463.6"/><line x1="1016.88" y1="461.5" x2="1016.88" y2="463.6"/><line x1="1022.0400000000001" y1="461.5" x2="1022.0400000000001" y2="463.6"/><line x1="1027.2" y1="461.5" x2="1027.2" y2="463.6"/><line x1="1032.3600000000001" y1="461.5" x2="1032.3600000000001" y2="463.6"/><line x1="1037.52" y1="461.5" x2="1037.52" y2="463.6"/><line x1="1042.68" y1="461.5" x2="1042.68" y2="463.6"/><line x1="1047.8400000000001" y1="461.5" x2="1047.8400000000001" y2="463.6"/><line x1="1053.0" y1="461.5" x2="1053.0" y2="463.6"/><line x1="1058.16" y1="461.5" x2="1058.16" y2="463.6"/><line x1="1063.3200000000002" y1="461.5" x2="1063.3200000000002" y2="463.6"/><line x1="1068.48" y1="461.5" x2="1068.48" y2="463.6"/><line x1="1073.6399999999999" y1="461.5" x2="1073.6399999999999" y2="463.6"/><line x1="1078.8000000000002" y1="461.5" x2="1078.8000000000002" y2="463.6"/><line x1="1083.96" y1="461.5" x2="1083.96" y2="463.6"/><line x1="1089.12" y1="461.5" x2="1089.12" y2="463.6"/><line x1="1094.28" y1="461.5" x2="1094.28" y2="463.6"/></g>
 <rect x="151.5" y="389" width="12" height="11.5" fill="#dce9f5" stroke="#8db7e2" stroke-width="1"/>
 <text x="171.2" y="398" font-size="11" fill="#444" letter-spacing="-0.4">Total Bytes</text>
 <g font-size="7.8" fill="#2b7bc8"><text x="151.3" y="420">15 GB</text><text x="151.3" y="437.3">10 GB</text><text x="151.3" y="454.3">5 GB</text></g>
 <text x="1082.4" y="398" font-size="10.5" fill="#444" text-anchor="end" letter-spacing="-0.3">Data Rate</text>
 <rect x="1088.5" y="388.5" width="12" height="12" fill="#dcf0e2" stroke="#93d3a6" stroke-width="1"/>
 <g font-size="8.1" fill="#2fb86e" text-anchor="end"><text x="1099.3" y="409.3">40 Mbps</text><text x="1099.3" y="440">20 Mbps</text></g>
 <rect x="1018" y="377" width="2.2" height="124.5" fill="#000"/>
</svg>
<div class="t" style="left:700px;width:388px;text-align:right;top:503px;font-size:12.5px;line-height:15px;color:#333;letter-spacing:-0.23px">12:00 am - 1:00 am, Jul 12: 302.9 MB, 0.67 Mbps</div>

<div class="panel" style="top:548px;height:108px"></div>
<div class="abs" style="left:123px;top:599px;width:1002px;height:1px;background:#e1e1e1"></div>
<div class="t hd" style="left:140px;top:563px">Site Events</div>
<div class="t" style="left:282px;top:572px;font-size:11px;line-height:14px;color:#333">0</div>
<svg class="abs" style="left:1096px;top:567px" width="17" height="16" viewBox="0 0 17 16"><g stroke="#6e6e6e" stroke-width="1" fill="none"><line x1="1" y1="3.6" x2="15.2" y2="3.6"/><line x1="1" y1="8" x2="15.2" y2="8" stroke="#aaa" stroke-width="1.7"/><line x1="1" y1="12.4" x2="15.2" y2="12.4"/></g><g fill="#4a4a4a"><rect x="9.8" y="2.3" width="2.2" height="2.6" rx="0.8"/><rect x="3.8" y="6.8" width="2.2" height="2.4" rx="0.6"/><rect x="9.8" y="11.1" width="2.2" height="2.6" rx="0.8"/></g></svg>
<div class="t" style="left:143px;top:620.5px;font-size:13px;line-height:16px;color:#333;letter-spacing:-0.29px">There are no events to display</div>

<div class="panel" style="top:677px;height:100px"></div>
<div class="abs" style="left:123px;top:730px;width:1002px;height:1px;background:#e1e1e1"></div>
<div class="t hd" style="left:140px;top:694px;letter-spacing:-0.74px">Access Points</div>
<div class="t" style="left:304px;top:701px;font-size:14px;line-height:16px;color:#444;letter-spacing:-0.3px">13 Total</div>
<div class="t" style="left:367px;top:701px;font-size:13.5px;line-height:16px;color:#333;font-weight:bold;letter-spacing:-0.2px">10 Connected</div>
<div class="abs" style="left:367px;top:725.5px;width:87px;height:4.5px;background:#19a8ea"></div>
<div class="t th" style="left:140px;letter-spacing:0.17px">Name</div>
<div class="abs" style="left:296px;top:742px;width:10px;height:10px;background:#22b45a"></div>
<div class="t th" style="left:309.5px;letter-spacing:-0.26px">Connected</div>
<div class="abs" style="left:367px;top:742px;width:10px;height:10px;background:#ee8a40"></div>
<div class="t th" style="left:380.5px;letter-spacing:-0.3px">Reboot</div>
<div class="abs" style="left:421px;top:742px;width:10px;height:10px;background:#c8203c"></div>
<div class="t th" style="left:434.2px;letter-spacing:-0.23px">Disconnected</div>
<div class="t th" style="left:591px;letter-spacing:-0.43px">MAC Address</div>
<div class="t th" style="left:728.2px;letter-spacing:0.14px">Uptime</div>
<div class="t th" style="left:835px;letter-spacing:-0.15px">Clients</div>
<svg class="abs" style="left:880.4px;top:743.6px" width="9.6" height="8.7" viewBox="0 0 11 10"><path d="M1 1 L5.5 4.6 L10 1 M1 4.8 L5.5 8.4 L10 4.8" fill="none" stroke="#444" stroke-width="1.1"/></svg>
<div class="t th" style="left:898px;letter-spacing:-0.4px">Bytes</div>
<div class="t th" style="left:957.8px;letter-spacing:-0.32px">LLDP Name</div>
<div class="t th" style="left:1060.2px;letter-spacing:-0.37px">LLDP Port</div>
</div></body></html>
